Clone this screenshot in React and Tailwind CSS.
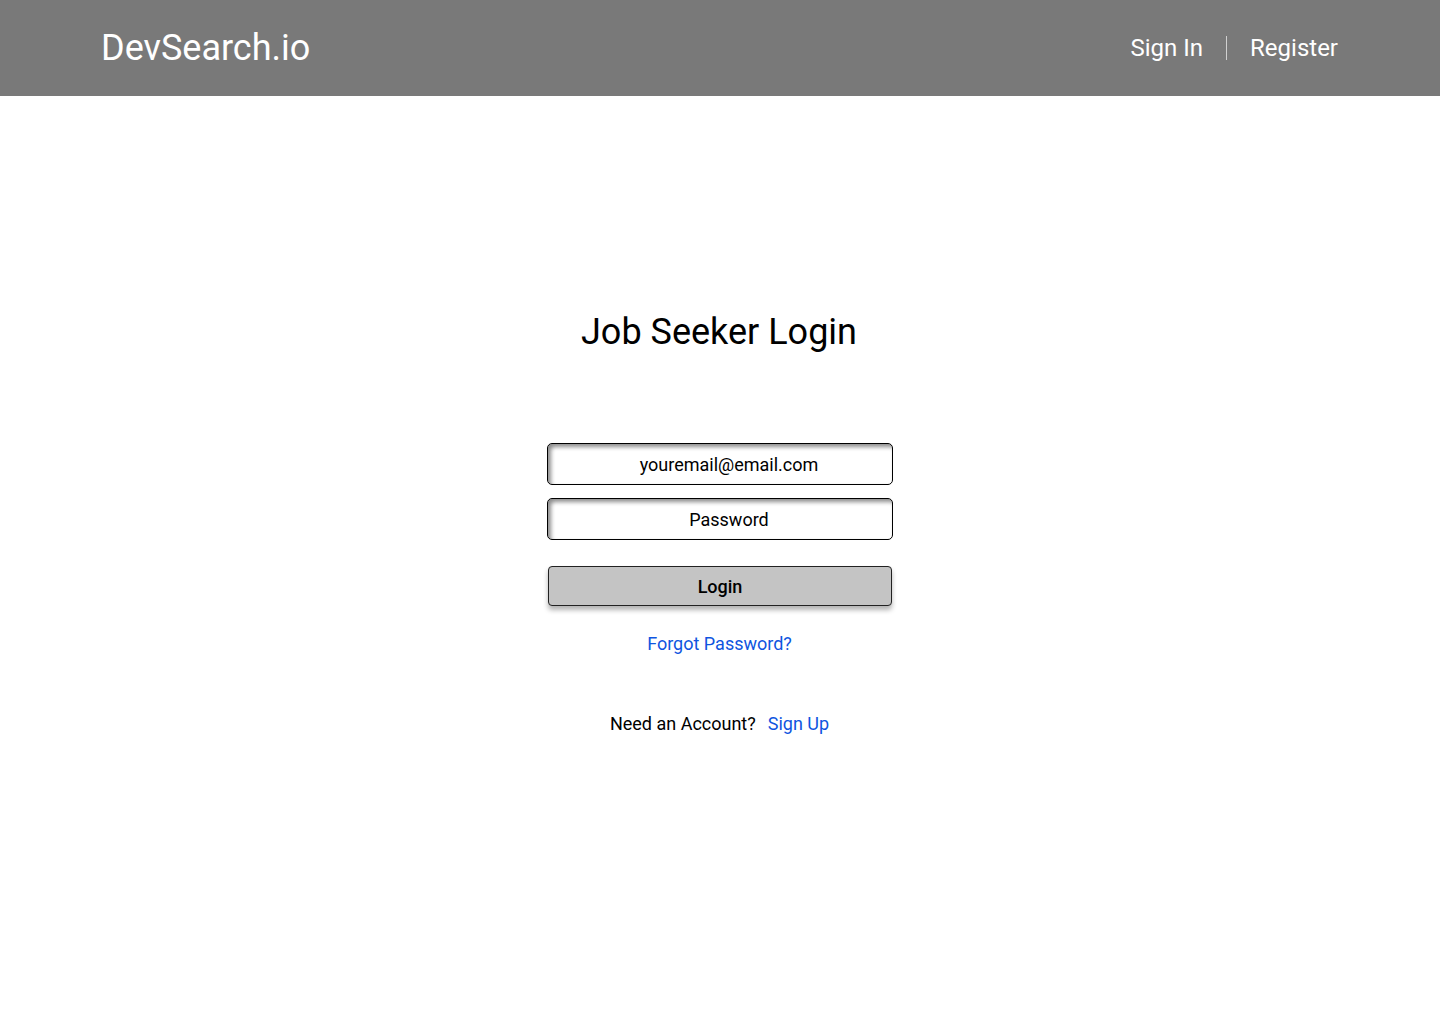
export default function App() {
  return (
    <div className="min-h-screen bg-white" style={{ fontFamily: "Roboto, 'Noto Sans', sans-serif" }}>
      <header className="h-[96px] bg-[#797979] flex items-center justify-between pl-[101px] pr-[102px]">
        <div className="text-white text-[36px] leading-none">DevSearch.io</div>
        <nav className="flex items-center text-white text-[24px] leading-none">
          <span>Sign In</span>
          <span className="mx-[23px] w-px h-[24px] bg-[#d0d0d0]"></span>
          <span>Register</span>
        </nav>
      </header>
      <main className="flex flex-col items-center">
        <h1 className="mt-[212px] -ml-[2px] text-[36px] leading-[48px] text-black">Job Seeker Login</h1>
        <div className="mt-[87px] w-[346px] flex flex-col">
          <div className="h-[42px] rounded-[5px] border border-black bg-white flex items-center justify-center pl-[18px] text-[18px] text-black shadow-[inset_3px_3px_4px_rgba(0,0,0,0.45)]">
            youremail@email.com
          </div>
          <div className="mt-[13px] h-[42px] rounded-[5px] border border-black bg-white flex items-center justify-center pl-[18px] text-[18px] text-black shadow-[inset_3px_3px_4px_rgba(0,0,0,0.45)]">
            Password
          </div>
          <button className="mt-[26px] mx-[1px] h-[40px] rounded-[4px] border border-[#222] bg-[#c4c4c4] text-[18px] font-medium text-black shadow-[0_4px_5px_rgba(0,0,0,0.3)]">
            Login
          </button>
        </div>
        <a className="mt-[25px] -ml-[1px] text-[18px] leading-[26px] text-[#0f55e0]">Forgot Password?</a>
        <div className="mt-[54px] -ml-[1px] text-[18px] leading-[26px] text-black">
          Need an Account?<span className="ml-[12px] text-[#0f55e0]">Sign Up</span>
        </div>
      </main>
    </div>
  );
}
